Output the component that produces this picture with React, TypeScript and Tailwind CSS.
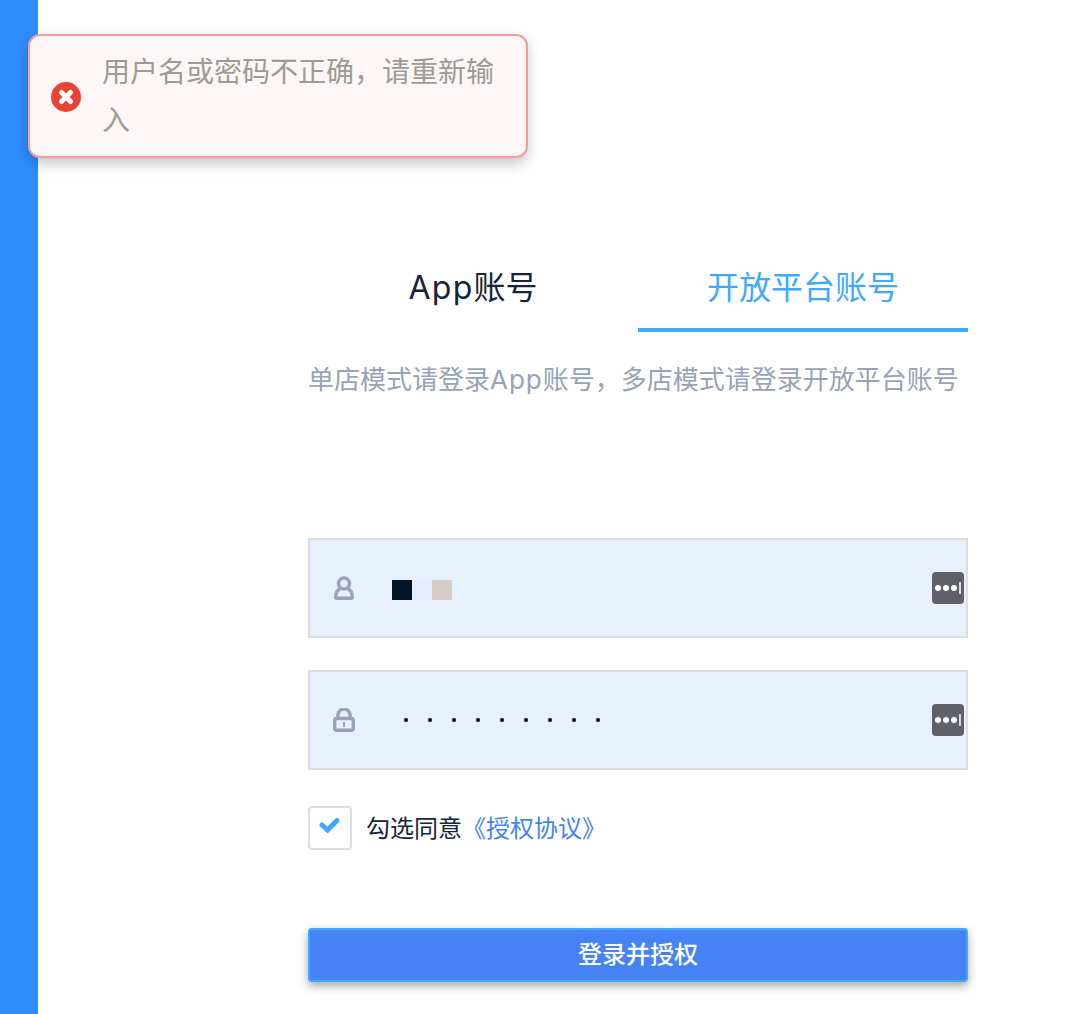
const FONT = "font-['Inter','Noto_Sans_CJK_SC',sans-serif]";

function KeyIcon() {
  return (
    <div className="flex h-8 w-8 items-center justify-start rounded-[4px] bg-[#5f6068] pl-[3px]">
      <span className="h-[6px] w-[6px] rounded-full bg-white" />
      <span className="ml-[2px] h-[6px] w-[6px] rounded-full bg-white" />
      <span className="ml-[2px] h-[6px] w-[6px] rounded-full bg-white" />
      <span className="ml-[2px] h-[12px] w-[2px] bg-[#d8d8dc]" />
    </div>
  );
}

function UserIcon() {
  return (
    <svg width="20" height="24" viewBox="0 0 20 24" fill="none" stroke="#98a2b8" strokeWidth="3.4" className="mx-[2px]">
      <circle cx="10" cy="7.5" r="5.5" />
      <path d="M6.5 12.5C3.4 14 1.6 17.2 1.7 21c0 .7.5 1.3 1.1 1.3h14.4c.6 0 1.1-.6 1.1-1.3.1-3.8-1.7-7-4.8-8.5" />
    </svg>
  );
}

function LockIcon() {
  return (
    <svg width="22" height="24" viewBox="0 0 22 24" fill="none" stroke="#98a2b8" strokeWidth="3.4" className="mx-[1px]">
      <path d="M5 11V7a6 6 0 0 1 12 0V11" />
      <rect x="1.7" y="10.5" width="18.6" height="11.8" rx="2" />
      <rect x="10" y="14" width="2" height="5" fill="#98a2b8" stroke="none" />
    </svg>
  );
}

export default function App() {
  return (
    <div className={`relative flex h-[1014px] overflow-hidden bg-white ${FONT}`}>
      <div className="w-[38px] shrink-0 bg-[#2e8dfd]" />

      {/* Error toast */}
      <div className="absolute left-[28px] top-[34px] flex h-[124px] w-[500px] items-center rounded-[12px] border-2 border-[#f39c9a] bg-[#fdf6f6] pl-[21px] pr-[30px] shadow-[0_6px_14px_rgba(0,0,0,0.22)]">
        <svg width="30" height="30" viewBox="0 0 30 30" className="mt-[2px] shrink-0">
          <circle cx="15" cy="15" r="15" fill="#ea4335" />
          <path d="M10.5 10.5l9 9M19.5 10.5l-9 9" stroke="#fff" strokeWidth="5" strokeLinecap="round" />
        </svg>
        <p className="ml-[21px] text-[28px] leading-[48px] text-[#9b9b97]">用户名或密码不正确，请重新输入</p>
      </div>

      <div className="ml-[270px] flex w-[660px] flex-col pt-[246px]">
        {/* Tabs */}
        <div className="flex h-[86px]">
          <div className="flex w-[330px] justify-center pt-[19px] text-[32px] leading-[46px] text-[#15233b]">
            <span className="tracking-[1.3px]">App</span>账号
          </div>
          <div className="flex w-[330px] justify-center border-b-[4px] border-[#3fa9ff] pt-[19px] text-[32px] leading-[46px] text-[#3fa9ff]">
            开放平台账号
          </div>
        </div>

        <p className="mt-[29px] text-[26px] leading-[38px] whitespace-nowrap text-[#98a2b8]">
          单店模式请登录<span className="tracking-[1px]">App</span>账号，多店模式请登录开放平台账号
        </p>

        {/* Account input */}
        <div className="mt-[139px] flex h-[100px] items-center border-2 border-[#dddddd] bg-[#e8f0fe] pl-[22px] pr-[2px]">
          <UserIcon />
          <span className="ml-[36px] mt-1 h-5 w-5 bg-[#031526]" />
          <span className="mt-1 h-5 w-5 bg-[#e3eefc]" />
          <span className="mt-1 h-5 w-5 bg-[#d6cdc6]" />
          <div className="ml-auto"><KeyIcon /></div>
        </div>

        {/* Password input */}
        <div className="mt-[32px] flex h-[100px] items-center border-2 border-[#dddddd] bg-[#e8f0fe] pl-[22px] pr-[2px]">
          <LockIcon />
          <div className="ml-[48px] flex gap-[20px]">
            {[0, 1, 2, 3, 4, 5, 6, 7, 8].map((i) => (
              <span key={i} className="h-1 w-1 rounded-full bg-black" />
            ))}
          </div>
          <div className="ml-auto"><KeyIcon /></div>
        </div>

        {/* Agreement */}
        <div className="mt-[36px] flex h-[44px] items-center">
          <div className="flex h-[44px] w-[44px] items-center justify-center rounded-[4px] border-2 border-[#dddddd] bg-white">
            <svg width="24" height="18" viewBox="0 0 24 18" fill="none" stroke="#3fa9ff" strokeWidth="5" strokeLinecap="round" className="mt-[-6px]">
              <path d="M4 9l5.5 5L19 4.5" />
            </svg>
          </div>
          <span className="ml-[14px] mt-[2px] text-[24px] leading-[44px] text-[#15233b]">勾选同意</span>
          <span className="mt-[2px] text-[24px] leading-[44px] text-[#4583f5]">《授权协议》</span>
        </div>

        {/* Submit */}
        <button className="mt-[78px] flex h-[54px] items-center justify-center rounded-[4px] border-2 border-[#3fa9ff] bg-[#4583f5] text-[24px] font-medium text-white shadow-[0_4px_10px_rgba(0,0,0,0.35)]">
          登录并授权
        </button>
      </div>
    </div>
  );
}
